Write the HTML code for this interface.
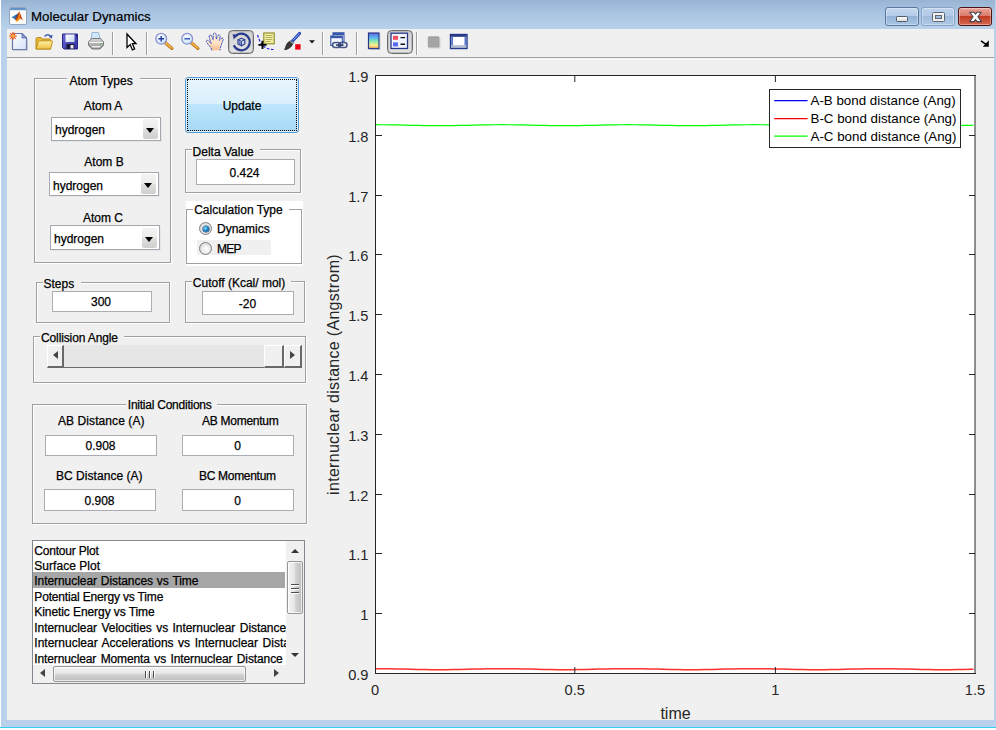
<!DOCTYPE html>
<html lang="en">
<head>
<meta charset="utf-8">
<title>Molecular Dynamics</title>
<style>
html,body{margin:0;padding:0;}
body{width:996px;height:730px;overflow:hidden;background:#fff;font-family:"Liberation Sans",sans-serif;font-size:12px;color:#000;position:relative;}
.abs,.abs *{position:absolute;box-sizing:border-box;}
#frame{left:0;top:0;width:996px;height:730px;background:#b9d1ea;}
#titlebar{left:1px;top:0;width:994px;height:29px;background:linear-gradient(to bottom,#98b4d3 0px,#a9c4e1 12px,#b9d1ea 29px);}
#title{left:31px;top:8px;font-size:13.3px;line-height:18px;color:#000;white-space:nowrap;-webkit-text-stroke:0.2px #000;}
#client{left:7px;top:29px;width:987px;height:691px;background:#f0f0f0;}
#tbline1{left:0;top:28px;width:987px;height:1px;background:#a0a0a0;}
#tbline2{left:0;top:29px;width:987px;height:2px;background:#f7f7f7;}
.ui{font-size:12px;line-height:14px;white-space:nowrap;-webkit-text-stroke:0.25px #000;}
.lbl{text-align:center;}
.panel{border:1px solid #a0a0a0;box-shadow:1px 1px 0 #fff, inset 1px 1px 0 #fff;}
.popup{background:#fff;border:1px solid #a3a8b0;box-shadow:1px 1px 0 #e6e6e6;}
.popup span{white-space:nowrap;}
.popup .dd{right:2px;top:1px;width:15px;height:20px;background:linear-gradient(to bottom,#f3f3f3 0%,#ebebeb 49%,#dedede 50%,#cfcfcf 100%);border-radius:2px;}
.popup .dd:after{content:"";position:absolute;left:3px;top:9px;border-left:4.5px solid transparent;border-right:4.5px solid transparent;border-top:5px solid #000;}
#update{border:1px solid #5a9bd0;border-radius:3px;background:linear-gradient(to bottom,#eaf6fd 0%,#d9f0fc 48%,#bee6fd 49%,#a7d9f5 100%);box-shadow:inset 0 0 0 1px #d4eefc;}
#update .focus{left:1px;top:1px;right:1px;bottom:1px;border:1px dotted #000;}
#update span{left:0;right:0;top:21px;text-align:center;}
.radio{width:13px;height:13px;border-radius:50%;border:1px solid #7e7e7e;background:radial-gradient(circle at 55% 55%,#fdfdfd 0,#f2f2f2 35%,#c4c4c4 100%);}
.radio.on:after{content:"";position:absolute;left:2.5px;top:2.5px;width:6px;height:6px;border-radius:50%;background:radial-gradient(circle at 38% 38%,#8fe0fb 0,#1c86c8 45%,#0d3f78 100%);box-shadow:0 0 0 .6px #16386a;}
#vsb{background:#f0f0f0;}
#hsb{background:#f0f0f0;}

.ptitle{background:#f0f0f0;height:14px;line-height:14px;}
.edit{background:#fff;border:1px solid #abadb3;text-align:center;padding-top:1px;}
#slider{background:#e6e6e6;border-bottom:1px solid #6d6d6d;}
.sbtn{background:#f0f0f0;border-left:1px solid #fff;border-top:1px solid #fff;border-right:2px solid #696969;border-bottom:2px solid #696969;}
#list{background:#fff;border:1px solid #828790;overflow:hidden;}
.li{left:1.3px;width:251.7px;height:14px;line-height:14px;overflow:hidden;white-space:nowrap;}
.sel{background:#a6a6a6;}

.tri-l{width:0;height:0;border-top:4px solid transparent;border-bottom:4px solid transparent;border-right:5px solid #444;}
.tri-r{width:0;height:0;border-top:4px solid transparent;border-bottom:4px solid transparent;border-left:5px solid #444;}
.tri-u{width:0;height:0;border-left:4px solid transparent;border-right:4px solid transparent;border-bottom:4.5px solid #333;}
.tri-d{width:0;height:0;border-left:4px solid transparent;border-right:4px solid transparent;border-top:4.5px solid #333;}
.thumb{border:1px solid #979797;border-radius:2px;background:linear-gradient(to right,#f5f5f5 0%,#e6e6e6 45%,#d2d2d2 55%,#bdbdbd 100%);box-shadow:inset 0 0 0 1px rgba(255,255,255,.7);}
.thumb.h{background:linear-gradient(to bottom,#f5f5f5 0%,#e6e6e6 45%,#d2d2d2 55%,#bdbdbd 100%);}
.thumb b{width:8px;height:1px;background:#4d4d4d;box-shadow:0 1px 0 #fff;}
.thumb.h b{width:1px;height:7px;box-shadow:1px 0 0 #fff;}
.tsep{top:32px;width:1px;height:23px;background:#a0a0a0;box-shadow:1px 0 0 #fff;}
.tpress{border:1.5px solid #6c6c6c;border-radius:4.5px;background:linear-gradient(#d2d2d2,#e4e4e4);box-shadow:inset 0 0 0 1px #bdbdbd;}
.cbtn{border:1px solid #56789f;border-radius:3px;box-shadow:inset 0 0 0 1px rgba(255,255,255,.35);}
</style>
</head>
<body>
<div id="frame" class="abs">
  <div id="titlebar"></div>
  <div id="title">Molecular Dynamics</div>
  <div id="client">
    <div id="tbline1"></div><div id="tbline2"></div>
    <div id="left" class="ui" style="left:-7px;top:-29px;width:330px;height:730px;">
      <!-- Atom Types -->
      <div class="panel" style="left:34px;top:78px;width:137px;height:185px"></div>
      <div class="ptitle" style="left:67px;top:74px;padding:0 7px 0 2.5px">Atom Types</div>
      <div class="lbl" style="left:52px;top:99px;width:102px">Atom A</div>
      <div class="popup" style="left:51px;top:117px;width:110px;height:24px"><span style="left:3px;top:5px">hydrogen</span><i class="dd"></i></div>
      <div class="lbl" style="left:53px;top:155px;width:102px">Atom B</div>
      <div class="popup" style="left:49px;top:172px;width:110px;height:24px"><span style="left:3px;top:6px">hydrogen</span><i class="dd"></i></div>
      <div class="lbl" style="left:52px;top:211px;width:102px">Atom C</div>
      <div class="popup" style="left:50px;top:225px;width:110px;height:25px"><span style="left:3px;top:6px">hydrogen</span><i class="dd" style="top:2px"></i></div>
      <!-- Update -->
      <div id="update" style="left:185px;top:77px;width:114px;height:56px"><div class="focus"></div><span>Update</span></div>
      <!-- Delta -->
      <div class="panel" style="left:185px;top:149px;width:116px;height:44px"></div>
      <div class="ptitle" style="left:192px;top:145px;padding:0 6px 0 0.6px">Delta Value</div>
      <div class="edit" style="left:196px;top:159px;width:99px;height:26px;line-height:24px;padding-right:2px">0.424</div>
      <!-- Calc type -->
      <div style="left:186px;top:201px;width:117px;height:65px;background:#fff"></div>
      <div class="panel" style="left:186px;top:209px;width:116px;height:55px;box-shadow:none;"></div>
      <div class="ptitle" style="left:193px;top:203px;background:#fff;padding:0 6px 0 1.2px">Calculation Type</div>
      <div style="left:197px;top:240px;width:74px;height:15px;background:#f0f0f0"></div>
      <div class="radio on" style="left:199px;top:222px"></div>
      <div style="left:217px;top:222px">Dynamics</div>
      <div class="radio" style="left:199px;top:242px"></div>
      <div style="left:217px;top:242px;letter-spacing:-0.8px">MEP</div>
      <!-- Steps -->
      <div class="panel" style="left:36px;top:282px;width:134px;height:41px"></div>
      <div class="ptitle" style="left:43px;top:277px;padding:0 7px 0 0.5px">Steps</div>
      <div class="edit" style="left:52px;top:291px;width:100px;height:21px;line-height:19px;padding-right:2px">300</div>
      <!-- Cutoff -->
      <div class="panel" style="left:185px;top:281px;width:120px;height:42px"></div>
      <div class="ptitle" style="left:192px;top:276px;padding:0 6px 0 0.8px">Cutoff (Kcal/ mol)</div>
      <div class="edit" style="left:202px;top:291px;width:92px;height:24px;line-height:22px;padding-right:1px">-20</div>
      <!-- Collision Angle -->
      <div class="panel" style="left:33px;top:336px;width:273px;height:47px"></div>
      <div class="ptitle" style="left:40px;top:331px;padding:0 6px 0 1px;letter-spacing:-0.12px">Collision Angle</div>
      <div id="slider" style="left:47px;top:345px;width:255px;height:23px">
        <div class="sbtn" style="left:0;top:0;width:17px;height:23px"><i class="tri-l" style="left:5px;top:5px"></i></div>
        <div class="sbtn" style="left:217px;top:0;width:20px;height:23px"></div>
        <div class="sbtn" style="left:237px;top:0;width:18px;height:23px"><i class="tri-r" style="left:5px;top:5px"></i></div>
      </div>
      <!-- Initial Conditions -->
      <div class="panel" style="left:32px;top:404px;width:275px;height:120px"></div>
      <div class="ptitle" style="left:126px;top:398px;padding:0 5px 0 1.8px;letter-spacing:-0.24px">Initial Conditions</div>
      <div style="left:58px;top:414px;letter-spacing:0.08px">AB Distance (A)</div>
      <div style="left:202px;top:414px;letter-spacing:-0.27px">AB Momentum</div>
      <div class="edit" style="left:45px;top:435px;width:112px;height:21px;line-height:19px;padding-right:1px">0.908</div>
      <div class="edit" style="left:182px;top:435px;width:112px;height:21px;line-height:19px;padding-right:1px">0</div>
      <div style="left:56px;top:469px;letter-spacing:0.04px">BC Distance (A)</div>
      <div style="left:199px;top:469px;letter-spacing:-0.3px">BC Momentum</div>
      <div class="edit" style="left:44px;top:489px;width:112px;height:22px;line-height:20px;padding-right:1px">0.908</div>
      <div class="edit" style="left:182px;top:489px;width:112px;height:22px;line-height:20px;padding-right:1px">0</div>
      <!-- Listbox -->
      <div id="list" style="left:32px;top:540px;width:273px;height:144px">
        <div class="sel" style="left:0;top:31px;width:252px;height:16px"></div>
        <div class="li" style="top:3px;letter-spacing:-0.2px">Contour Plot</div>
        <div class="li" style="top:18px;letter-spacing:0.03px">Surface Plot</div>
        <div class="li" style="top:33px;word-spacing:0.6px;letter-spacing:-0.06px">Internuclear Distances vs Time</div>
        <div class="li" style="top:49px;letter-spacing:-0.16px">Potential Energy vs Time</div>
        <div class="li" style="top:64px;letter-spacing:-0.08px">Kinetic Energy vs Time</div>
        <div class="li" style="top:80px;word-spacing:1.2px;letter-spacing:-0.052px">Internuclear Velocities vs Internuclear Distance</div>
        <div class="li" style="top:95px;word-spacing:1.2px;letter-spacing:0px">Internuclear Accelerations vs Internuclear Distance</div>
        <div class="li" style="top:111px;word-spacing:1.2px;letter-spacing:-0.118px">Internuclear Momenta vs Internuclear Distance</div>
        <div id="vsb" style="left:253px;top:0px;width:18px;height:124px">
          <i class="tri-u" style="left:5px;top:8px"></i>
          <div class="thumb" style="left:1px;top:20px;width:16px;height:53px"><b style="left:3px;top:22px"></b><b style="left:3px;top:26px"></b><b style="left:3px;top:30px"></b></div>
          <i class="tri-d" style="left:5px;top:112px"></i>
        </div>
        <div id="hsb" style="left:0px;top:124px;width:253px;height:18px">
          <i class="tri-l" style="left:7px;top:4px"></i>
          <div class="thumb h" style="left:20px;top:1px;width:193px;height:16px"><b style="left:91px;top:4px"></b><b style="left:95px;top:4px"></b><b style="left:99px;top:4px"></b></div>
          <i class="tri-r" style="left:241px;top:4px"></i>
        </div>
        <div style="left:253px;top:124px;width:18px;height:18px;background:#f0f0f0"></div>
      </div>
    </div>
        <svg id="plot" style="left:313px;top:31px" width="674" height="690" viewBox="320 60 674 690" font-family="Liberation Sans, sans-serif" shape-rendering="crispEdges">
      <rect x="375.5" y="75.5" width="599.5" height="598" fill="#fff" stroke="none"/>
      <g shape-rendering="auto" fill="none" stroke-width="1.2" stroke-linejoin="round">
        <path d="M376 668.70 L383 668.73 L390 668.82 L397 668.95 L404 669.11 L411 669.29 L418 669.45 L425 669.58 L432 669.67 L439 669.70 L446 669.67 L453 669.58 L460 669.45 L467 669.29 L474 669.11 L481 668.95 L488 668.82 L495 668.73 L502 668.70 L509 668.73 L516 668.82 L523 668.95 L530 669.11 L537 669.29 L544 669.45 L551 669.58 L558 669.67 L565 669.70 L572 669.67 L579 669.58 L586 669.45 L593 669.29 L600 669.11 L607 668.95 L614 668.82 L621 668.73 L628 668.70 L635 668.73 L642 668.82 L649 668.95 L656 669.11 L663 669.29 L670 669.45 L677 669.58 L684 669.67 L691 669.70 L698 669.67 L705 669.58 L712 669.45 L719 669.29 L726 669.11 L733 668.95 L740 668.82 L747 668.73 L754 668.70 L761 668.73 L768 668.82 L775 668.95 L782 669.11 L789 669.29 L796 669.45 L803 669.58 L810 669.67 L817 669.70 L824 669.67 L831 669.58 L838 669.45 L845 669.29 L852 669.11 L859 668.95 L866 668.82 L873 668.73 L880 668.70 L887 668.73 L894 668.82 L901 668.95 L908 669.11 L915 669.29 L922 669.45 L929 669.58 L936 669.67 L943 669.70 L950 669.67 L957 669.58 L964 669.45 L971 669.29 L973.5 669.22" stroke="#ff3030" stroke-width="1.500"/>
        <path d="M376 124.70 L383 124.73 L390 124.82 L397 124.95 L404 125.11 L411 125.29 L418 125.45 L425 125.58 L432 125.67 L439 125.70 L446 125.67 L453 125.58 L460 125.45 L467 125.29 L474 125.11 L481 124.95 L488 124.82 L495 124.73 L502 124.70 L509 124.73 L516 124.82 L523 124.95 L530 125.11 L537 125.29 L544 125.45 L551 125.58 L558 125.67 L565 125.70 L572 125.67 L579 125.58 L586 125.45 L593 125.29 L600 125.11 L607 124.95 L614 124.82 L621 124.73 L628 124.70 L635 124.73 L642 124.82 L649 124.95 L656 125.11 L663 125.29 L670 125.45 L677 125.58 L684 125.67 L691 125.70 L698 125.67 L705 125.58 L712 125.45 L719 125.29 L726 125.11 L733 124.95 L740 124.82 L747 124.73 L754 124.70 L761 124.73 L768 124.82 L775 124.95 L782 125.11 L789 125.29 L796 125.45 L803 125.58 L810 125.67 L817 125.70 L824 125.67 L831 125.58 L838 125.45 L845 125.29 L852 125.11 L859 124.95 L866 124.82 L873 124.73 L880 124.70 L887 124.73 L894 124.82 L901 124.95 L908 125.11 L915 125.29 L922 125.45 L929 125.58 L936 125.67 L943 125.70 L950 125.67 L957 125.58 L964 125.45 L971 125.29 L973.5 125.22" stroke="#00ff00"/>
      </g>
      <g stroke="#262626" stroke-width="1" fill="none">
        <path d="M375.5 75v599M375 75.5h600.5M375 673.5h600.5"/>
        <path d="M975 75v599M574.800 673v-6M574.800 76v6M775.400 673v-6M775.400 76v6" shape-rendering="auto"/>
        <path d="M376 135.5h5.5M376 195.5h5.5M376 254.5h5.5M376 314.5h5.5M376 374.5h5.5M376 434.5h5.5M376 494.5h5.5M376 553.5h5.5M376 613.5h5.5"/>
        <path d="M974.5 135.5h-5.5M974.5 195.5h-5.5M974.5 254.5h-5.5M974.5 314.5h-5.5M974.5 374.5h-5.5M974.5 434.5h-5.5M974.5 494.5h-5.5M974.5 553.5h-5.5M974.5 613.5h-5.5"/>
      </g>
      <g fill="#262626" font-size="14.67" text-anchor="end" shape-rendering="auto">
        <text x="368.5" y="81.5">1.9</text>
        <text x="368.5" y="141.5">1.8</text>
        <text x="368.5" y="201.5">1.7</text>
        <text x="368.5" y="260.5">1.6</text>
        <text x="368.5" y="320.5">1.5</text>
        <text x="368.5" y="380.5">1.4</text>
        <text x="368.5" y="440.5">1.3</text>
        <text x="368.5" y="500.5">1.2</text>
        <text x="368.5" y="559.5">1.1</text>
        <text x="368.5" y="619.5">1</text>
        <text x="368.5" y="679.5">0.9</text>
      </g>
      <g fill="#262626" font-size="14.67" text-anchor="middle" shape-rendering="auto">
        <text x="375" y="695.4">0</text>
        <text x="574.800" y="695.4">0.5</text>
        <text x="775.400" y="695.4">1</text>
        <text x="975" y="695.4">1.5</text>
      </g>
      <g fill="#262626" font-size="16" text-anchor="middle" shape-rendering="auto">
        <text x="675.5" y="718.6">time</text>
        <text transform="translate(339.4,374.5) rotate(-90)" letter-spacing="0.3">internuclear distance (Angstrom)</text>
      </g>
      <rect x="769.5" y="89.5" width="191" height="58" fill="#fff" stroke="#262626"/>
      <g shape-rendering="auto" stroke-width="1.200"><path d="M774.200 100.700h33.400" stroke="#0000ff"/>
      <path d="M774.200 118.600h33.400" stroke="#ff0000"/>
      <path d="M774.200 136.200h33.400" stroke="#00ff00"/></g>
      <g fill="#000" font-size="13.33" shape-rendering="auto">
        <text x="810.500" y="105.400">A-B bond distance (Ang)</text>
        <text x="810.500" y="123.400">B-C bond distance (Ang)</text>
        <text x="810.500" y="141.400">A-C bond distance (Ang)</text>
      </g>
    </svg>

  </div>
  <div id="toolbar" style="left:0;top:0;width:996px;height:58px;">
    <!-- app icon -->
    <svg style="left:9px;top:7px" width="18" height="18" viewBox="0 0 18 18">
      <defs><linearGradient id="ml1" x1="0" y1="0" x2="1" y2="0"><stop offset="0" stop-color="#4a9ad8"/><stop offset=".6" stop-color="#2a5fa0"/><stop offset="1" stop-color="#1c3c70"/></linearGradient>
      <linearGradient id="ml2" x1="0" y1="0" x2="0" y2="1"><stop offset="0" stop-color="#e84818"/><stop offset=".55" stop-color="#f07818"/><stop offset="1" stop-color="#f8c020"/></linearGradient></defs>
      <rect x=".5" y=".5" width="17" height="17" rx="1.500" fill="#fbfbfb" stroke="#94a4bc"/>
      <path d="M1 3 V2 Q1 1 2 1 H16 Q17 1 17 2 V3 Z" fill="#5f90c4"/>
      <path d="M1 3 H17" stroke="#8cb4dc" stroke-width=".6"/>
      <path d="M2.300 10.300 L8.300 7 L10 5.500 L8.500 10 L7 13.200 L4.800 11.600 Z" fill="url(#ml1)"/>
      <path d="M6.200 12.800 C8 10.500 9.200 6.500 10.300 4.600 C11.200 6.500 12.300 11 14.200 13.600 C12.800 12.300 12 11.500 11.200 12 C10.200 12.600 9 14.800 7.900 15 C7.200 14.600 6.800 13.600 6.200 12.800 Z" fill="url(#ml2)"/>
      <path d="M6.200 12.800 C8 10.500 9.200 6.500 10.300 4.600 C9.800 7.500 9 11 7.400 13.600 Z" fill="#a82010" opacity=".8"/>
      <path d="M10.300 4.600 C11.200 6.500 12.300 11 14.200 13.600 C12.900 12.400 12.200 11.700 11.500 11.900 C11.300 9.500 10.900 6.600 10.300 4.600Z" fill="#b02818" opacity=".85"/>
      <path d="M10.200 5.300 L10.700 8.600 L10 8.800 Z" fill="#f8d820"/>
    </svg>
    <!-- new -->
    <svg style="left:9px;top:31px" width="20" height="20" viewBox="0 0 20 20">
      <defs><linearGradient id="pg" x1="0" y1="0" x2="1" y2="1"><stop offset="0" stop-color="#ffffff"/><stop offset="1" stop-color="#d4e2f8"/></linearGradient></defs>
      <path d="M3.5 2.5 H13 L17.5 7 V18.500 H3.500 Z" fill="url(#pg)" stroke="#6878b0" stroke-width="1.2"/>
      <path d="M13 2.500 V7 H17.500 Z" fill="#8c9cd0" stroke="#5868a8" stroke-width=".8"/>
      <path d="M4 19.300 H18.300 V8" fill="none" stroke="#a8b0c8" stroke-width="1" opacity=".7"/>
      <g stroke="#e85820" stroke-width="1.1"><path d="M4 1 V9 M0 5 H8 M1.200 2.200 L6.800 7.800 M6.800 2.200 L1.200 7.800"/></g>
      <circle cx="4" cy="5" r="2" fill="#f8b040" stroke="#e85820" stroke-width=".7"/>
    </svg>
    <!-- open -->
    <svg style="left:34px;top:31px" width="20" height="20" viewBox="0 0 20 20">
      <defs><linearGradient id="fo" x1="0" y1="0" x2="0" y2="1"><stop offset="0" stop-color="#fff4a8"/><stop offset="1" stop-color="#f0c040"/></linearGradient></defs>
      <path d="M2 18 V8 Q2 6.500 3.500 6.500 H7 L8.500 8 H15.500 Q16.500 8 16.500 9 V18 Z" fill="#e8b838" stroke="#b88818" stroke-width="1"/>
      <path d="M2 18 L4.500 10.500 Q4.800 9.800 5.800 9.800 H18 Q18.800 9.800 18.400 10.800 L16.500 18 Z" fill="url(#fo)" stroke="#c09020" stroke-width="1"/>
      <path d="M10.500 5.500 Q13.500 2 17 5.500" fill="none" stroke="#4868b0" stroke-width="1.300"/>
      <path d="M18.500 3.500 L18 7.500 L14.800 6 Z" fill="#3858a8"/>
    </svg>
    <!-- save -->
    <svg style="left:61px;top:32px" width="18" height="18" viewBox="0 0 18 18">
      <defs><linearGradient id="sv" x1="0" y1="0" x2="1" y2="1"><stop offset="0" stop-color="#6868d8"/><stop offset="1" stop-color="#3030a0"/></linearGradient>
      <linearGradient id="sv2" x1="0" y1="0" x2="1" y2="1"><stop offset="0" stop-color="#ffffff"/><stop offset="1" stop-color="#c8d4f0"/></linearGradient></defs>
      <path d="M1.500 2 H16.500 V17 H3 L1.500 15.500 Z" fill="url(#sv)" stroke="#282888" stroke-width="1"/>
      <rect x="4.500" y="2.500" width="9" height="7.500" fill="url(#sv2)"/>
      <rect x="5.500" y="12" width="8" height="5" fill="#181838"/>
      <rect x="9.500" y="13" width="3" height="3.500" fill="#e8e8f8"/>
      <rect x="14.800" y="3" width="1.200" height="1.500" fill="#181850"/>
    </svg>
    <!-- print -->
    <svg style="left:86px;top:31px" width="20" height="20" viewBox="0 0 20 20">
      <defs><linearGradient id="pr" x1="0" y1="0" x2="0" y2="1"><stop offset="0" stop-color="#d8d8d8"/><stop offset="1" stop-color="#909090"/></linearGradient></defs>
      <path d="M6 1.500 H12.500 L14.500 9 H5 Z" fill="#d0e8fc" stroke="#88a8d0" stroke-width=".8"/>
      <path d="M2.500 11 L5.500 7.500 H14.500 L17.500 11 V14.500 L14 18 H6 L2.500 14.500 Z" fill="url(#pr)" stroke="#707070" stroke-width=".9"/>
      <path d="M3 11.500 H17 " stroke="#f4f4f4" stroke-width="1"/>
      <path d="M4.500 14.800 L6.500 16.800 H13.500 L15.500 14.800 Z" fill="#ffffff" stroke="#909090" stroke-width=".6"/>
      <rect x="14.500" y="12.200" width="1.300" height="1.200" fill="#40c040"/>
    </svg>
    <div class="tsep" style="left:112px"></div>
    <!-- pointer -->
    <svg style="left:124px;top:32px" width="16" height="20" viewBox="0 0 16 20">
      <path d="M3 2 V15.500 L6.200 12.600 L8.400 18 L10.600 17 L8.400 11.700 H12 Z" fill="#fff" stroke="#000" stroke-width="1.300" stroke-linejoin="miter"/>
    </svg>
    <div class="tsep" style="left:146px"></div>
    <!-- zoom in -->
    <svg style="left:153px;top:31px" width="22" height="20" viewBox="0 0 22 20">
      <defs><radialGradient id="ln" cx=".4" cy=".35" r=".7"><stop offset="0" stop-color="#ffffff"/><stop offset="1" stop-color="#c0e0f8"/></radialGradient></defs>
      <path d="M12 11.500 L18.800 17.300" stroke="#b87820" stroke-width="3.400" stroke-linecap="round"/>
      <path d="M12 11.200 L18.600 16.800" stroke="#f0b048" stroke-width="1.800" stroke-linecap="round"/>
      <circle cx="8.200" cy="7.800" r="5.400" fill="url(#ln)" stroke="#8c90d0" stroke-width="1.300"/>
      <path d="M5.400 7.800 H11 M8.200 5 V10.600" stroke="#2038a0" stroke-width="1.400"/>
    </svg>
    <!-- zoom out -->
    <svg style="left:178.500px;top:31px" width="22" height="20" viewBox="0 0 22 20">
      <path d="M12 11.500 L18.800 17.300" stroke="#b87820" stroke-width="3.400" stroke-linecap="round"/>
      <path d="M12 11.200 L18.600 16.800" stroke="#f0b048" stroke-width="1.800" stroke-linecap="round"/>
      <circle cx="8.200" cy="7.800" r="5.400" fill="url(#ln)" stroke="#8c90d0" stroke-width="1.300"/>
      <path d="M5.400 7.800 H11" stroke="#3050b0" stroke-width="1.400"/>
    </svg>
    <!-- hand -->
    <svg style="left:205px;top:32px" width="20" height="20" viewBox="0 0 20 20">
      <defs><linearGradient id="hd" x1="0" y1="0" x2="0" y2="1"><stop offset="0" stop-color="#fef0dc"/><stop offset=".6" stop-color="#fce0c4"/><stop offset="1" stop-color="#f4bc88"/></linearGradient></defs>
      <path d="M7 18.300 L5.500 15.200 L1.600 10.400 Q0.900 9 2 8.400 Q3 8 3.800 9 L6.200 11.600 L4.200 5 Q3.900 3.400 5 3 Q6.200 2.700 6.700 4.200 L8.100 7.600 L8.300 2.600 Q8.400 1 9.700 1 Q11 1 11.100 2.600 L11.300 7.400 L12.600 4 Q13.200 2.600 14.300 3 Q15.400 3.500 15.100 5 L14.200 8.400 L16 6.600 Q17 5.600 17.900 6.300 Q18.700 7.100 18 8.300 L16.600 11.800 Q16.200 14.200 15.200 16 L15 18.300 Z" fill="url(#hd)" stroke="#fce4cc" stroke-width="1"/>
      <path d="M7 18.300 L5.500 15.200 L1.600 10.400 Q0.900 9 2 8.400 Q3 8 3.800 9 L6.200 11.600 L4.200 5 Q3.900 3.400 5 3 Q6.200 2.700 6.700 4.200 L8.100 7.600 L8.300 2.600 Q8.400 1 9.700 1 Q11 1 11.100 2.600 L11.300 7.400 L12.600 4 Q13.200 2.600 14.300 3 Q15.400 3.500 15.100 5 L14.200 8.400 L16 6.600 Q17 5.600 17.900 6.300 Q18.700 7.100 18 8.300 L16.600 11.800 Q16.200 14.200 15.200 16 L15 18.300" fill="none" stroke="#3454c8" stroke-width=".95" stroke-dasharray="2.600 .700"/>
    </svg>
    <!-- rotate (pressed) -->
    <div class="tpress" style="left:228px;top:30px;width:26px;height:24px"></div>
    <svg style="left:231px;top:32px" width="22" height="20" viewBox="0 0 22 20">
      <defs><linearGradient id="rt" x1="0" y1="1" x2="0" y2="0"><stop offset="0" stop-color="#2a3c8c" stop-opacity="0.300"/><stop offset=".5" stop-color="#2a3c8c"/></linearGradient></defs>
      <path d="M4.300 4.400 A8.300 8.300 0 1 1 2.800 13.200" fill="none" stroke="#2a3c8c" stroke-width="2.200"/>
      <path d="M1.600 2.200 L7 2.800 L2.800 7.600 Z" fill="#2a3c8c"/>
      <path d="M7 7.700 L10.400 6.300 L13.800 7.700 V12 L10.400 13.800 L7 12 Z" fill="#d4dcf2" stroke="#2a3c8c" stroke-width="1.200"/>
      <path d="M7 7.700 L10.400 9.300 L13.800 7.700 M10.400 9.300 V13.800" fill="none" stroke="#2a3c8c" stroke-width="1"/>
      <path d="M7.600 9 V11.700 L9.800 12.800 V10Z" fill="#6878b8"/>
    </svg>
    <!-- data cursor -->
    <svg style="left:256px;top:31px" width="20" height="20" viewBox="0 0 20 20">
      <path d="M1.500 4 C3 9 5 13 8 15.500 C10.500 17.500 14 18.500 18 18.500" fill="none" stroke="#2020e0" stroke-width="1.200" stroke-dasharray="2.600 1.600"/>
      <rect x="7.800" y="2" width="10.400" height="10.800" fill="#f4f0a0" stroke="#888820" stroke-width="1.100"/>
      <path d="M9.500 4.500 H16.500 M9.500 6.500 H16.500 M9.500 8.500 H16.500 M9.500 10.500 H14.500" stroke="#a0a050" stroke-width=".8"/>
      <path d="M6.500 9.800 V18 M2.400 13.900 H10.600" stroke="#000" stroke-width="1.900"/>
    </svg>
    <!-- brush -->
    <svg style="left:283px;top:31px" width="20" height="20" viewBox="0 0 20 20">
      <path d="M9.500 10 L16.500 2.500" stroke="#2848b8" stroke-width="3.200" stroke-linecap="round"/>
      <path d="M10.200 9 L16 2.800" stroke="#88a8f0" stroke-width="1" stroke-linecap="round"/>
      <path d="M7.800 9.200 L10.800 11.800 L9.400 13.300 L6.400 10.700 Z" fill="#9098a8" stroke="#505868" stroke-width=".6"/>
      <path d="M6.300 10.500 L9.500 13.400 C8.500 16 5 18.500 1.600 18.800 C2.800 16.500 3.200 12 6.300 10.500 Z" fill="#383838" stroke="#181818" stroke-width=".6"/>
      <rect x="12.200" y="13.200" width="5.400" height="5.400" fill="#f00018"/>
    </svg>
    <svg style="left:308px;top:39px" width="8" height="6" viewBox="0 0 8 6"><path d="M1 1.200 H7 L4 4.600 Z" fill="#181818"/></svg>
    <div class="tsep" style="left:322px"></div>
    <!-- link -->
    <svg style="left:329px;top:31px" width="20" height="20" viewBox="0 0 20 20">
      <rect x="4" y="1.800" width="11" height="9" fill="#f4f8ff" stroke="#3858a8" stroke-width="1.100"/>
      <rect x="4" y="1.800" width="11" height="2.200" fill="#3858a8"/>
      <rect x="1.800" y="5" width="11.500" height="9.500" fill="#f4f8ff" stroke="#3858a8" stroke-width="1.100"/>
      <rect x="1.800" y="5" width="11.500" height="2.200" fill="#3858a8"/>
      <rect x="3.600" y="11.600" width="8" height="5" rx="2.500" fill="#e8ecf4" stroke="#485888" stroke-width="1.500"/>
      <rect x="9.600" y="11.600" width="8.400" height="5" rx="2.500" fill="none" stroke="#485888" stroke-width="1.500"/>
      <path d="M7 14.100 H14.500" stroke="#283868" stroke-width="1.500"/>
    </svg>
    <div class="tsep" style="left:356px"></div>
    <!-- colorbar -->
    <svg style="left:367px;top:32px" width="14" height="18" viewBox="0 0 14 18">
      <defs><linearGradient id="cb" x1="0" y1="0" x2="0" y2="1"><stop offset="0" stop-color="#6c64e0"/><stop offset=".3" stop-color="#58b8f0"/><stop offset=".55" stop-color="#90e8b0"/><stop offset=".78" stop-color="#f8f088"/><stop offset="1" stop-color="#f8a860"/></linearGradient></defs>
      <rect x="1.500" y="1" width="10.500" height="15.500" fill="url(#cb)" stroke="#283888" stroke-width="1.200"/>
      <path d="M2 17.400 H12.800 V2" fill="none" stroke="#8890a8" stroke-width=".8" opacity=".7"/>
    </svg>
    <!-- legend pressed -->
    <div class="tpress" style="left:387px;top:30px;width:26px;height:24px"></div>
    <svg style="left:390px;top:32px" width="19" height="18" viewBox="0 0 19 18">
      <rect x="1" y="1.200" width="16.500" height="15.300" fill="#f0f4fc" stroke="#283888" stroke-width="1.300"/>
      <rect x="3" y="3.800" width="5" height="4" fill="#f05060"/>
      <rect x="3" y="10.400" width="5" height="4" fill="#5868f0"/>
      <path d="M10.500 5.600 H15 M10.500 12.200 H15" stroke="#101010" stroke-width="1.400"/>
    </svg>
    <div class="tsep" style="left:416px"></div>
    <!-- gray square -->
    <svg style="left:426px;top:35px" width="16" height="15" viewBox="0 0 16 15">
      <rect x="2.300" y="1.800" width="10.800" height="10.400" rx=".6" fill="#a4a4a4" stroke="#9a9a9a" stroke-width=".8"/>
      <path d="M3.300 12.900 H13.800 V3" fill="none" stroke="#c4c4c4" stroke-width="1"/>
    </svg>
    <!-- dock -->
    <svg style="left:449px;top:33px" width="20" height="17" viewBox="0 0 20 17">
      <rect x="1.500" y="1.500" width="16.500" height="14" fill="#fff" stroke="#283888" stroke-width="1.400"/>
      <rect x="2" y="2" width="15.500" height="1.800" fill="#283888"/>
      <rect x="2.200" y="4" width="1.800" height="8.500" fill="#5878d0"/>
      <rect x="15.500" y="4" width="1.800" height="8.500" fill="#5878d0"/>
      <rect x="2.200" y="12.400" width="15.100" height="2.400" fill="#98a4cc"/>
      <path d="M2.500 13.500 H17" stroke="#f0e8c0" stroke-width=".7" stroke-dasharray="1 1"/>
    </svg>
    <!-- dock arrow -->
    <svg style="left:979px;top:39px" width="12" height="9" viewBox="0 0 12 9">
      <path d="M2 1.800 L8 6.200" stroke="#000" stroke-width="1.600"/>
      <path d="M9.800 1.200 V7.800 H3.800 Z" fill="#000"/>
    </svg>
  </div>
  <div id="caption" style="left:0;top:0;width:996px;height:30px">
    <div class="cbtn" style="left:885px;top:7px;width:34px;height:19px;border-color:#56789f;background:linear-gradient(to bottom,#c4d9f0 0%,#b3cce8 48%,#92b2d6 50%,#a9c6e4 100%);">
      <div style="left:10px;top:8px;width:12px;height:6px;border:1px solid #545c68;border-radius:1.5px;background:linear-gradient(#fdfdfd,#dcdcdc)"></div>
    </div>
    <div class="cbtn" style="left:921px;top:7px;width:34px;height:19px;border-color:#85a3c6;background:linear-gradient(to bottom,#bdd3ec 0%,#b1c9e6 48%,#a0bcdc 50%,#afc9e6 100%);">
      <div style="left:10px;top:4px;width:13px;height:10px;border:1px solid #5e6672;border-radius:1.5px;background:#f2f2f2"></div>
      <div style="left:13px;top:7px;width:7px;height:4px;border:1px solid #5e6672;background:#a4c0e0"></div>
    </div>
    <div class="cbtn" style="left:958px;top:7px;width:34px;height:19px;border-color:#4e1414;background:linear-gradient(to bottom,#eaa797 0%,#d9776a 48%,#c13c22 50%,#d5694f 100%);">
      <svg style="left:10px;top:3px" width="13" height="12" viewBox="0 0 13 12"><path d="M0.800 1.200 H5 L6.500 3.100 L8 1.200 H12.200 L8.900 5.800 L12.400 10.600 H8.100 L6.500 8.500 L4.900 10.600 H0.600 L4.100 5.800 Z" fill="#fff" stroke="#43434f" stroke-width="1.100" stroke-linejoin="round"/></svg>
    </div>
  </div>

  <div style="left:0;top:0;width:1px;height:730px;background:#fff"></div>
  <div style="left:0;top:727px;width:996px;height:1px;background:#38d0f0"></div>
  <div style="left:0;top:728px;width:996px;height:2px;background:#fff"></div>
</div>
</body>
</html>
